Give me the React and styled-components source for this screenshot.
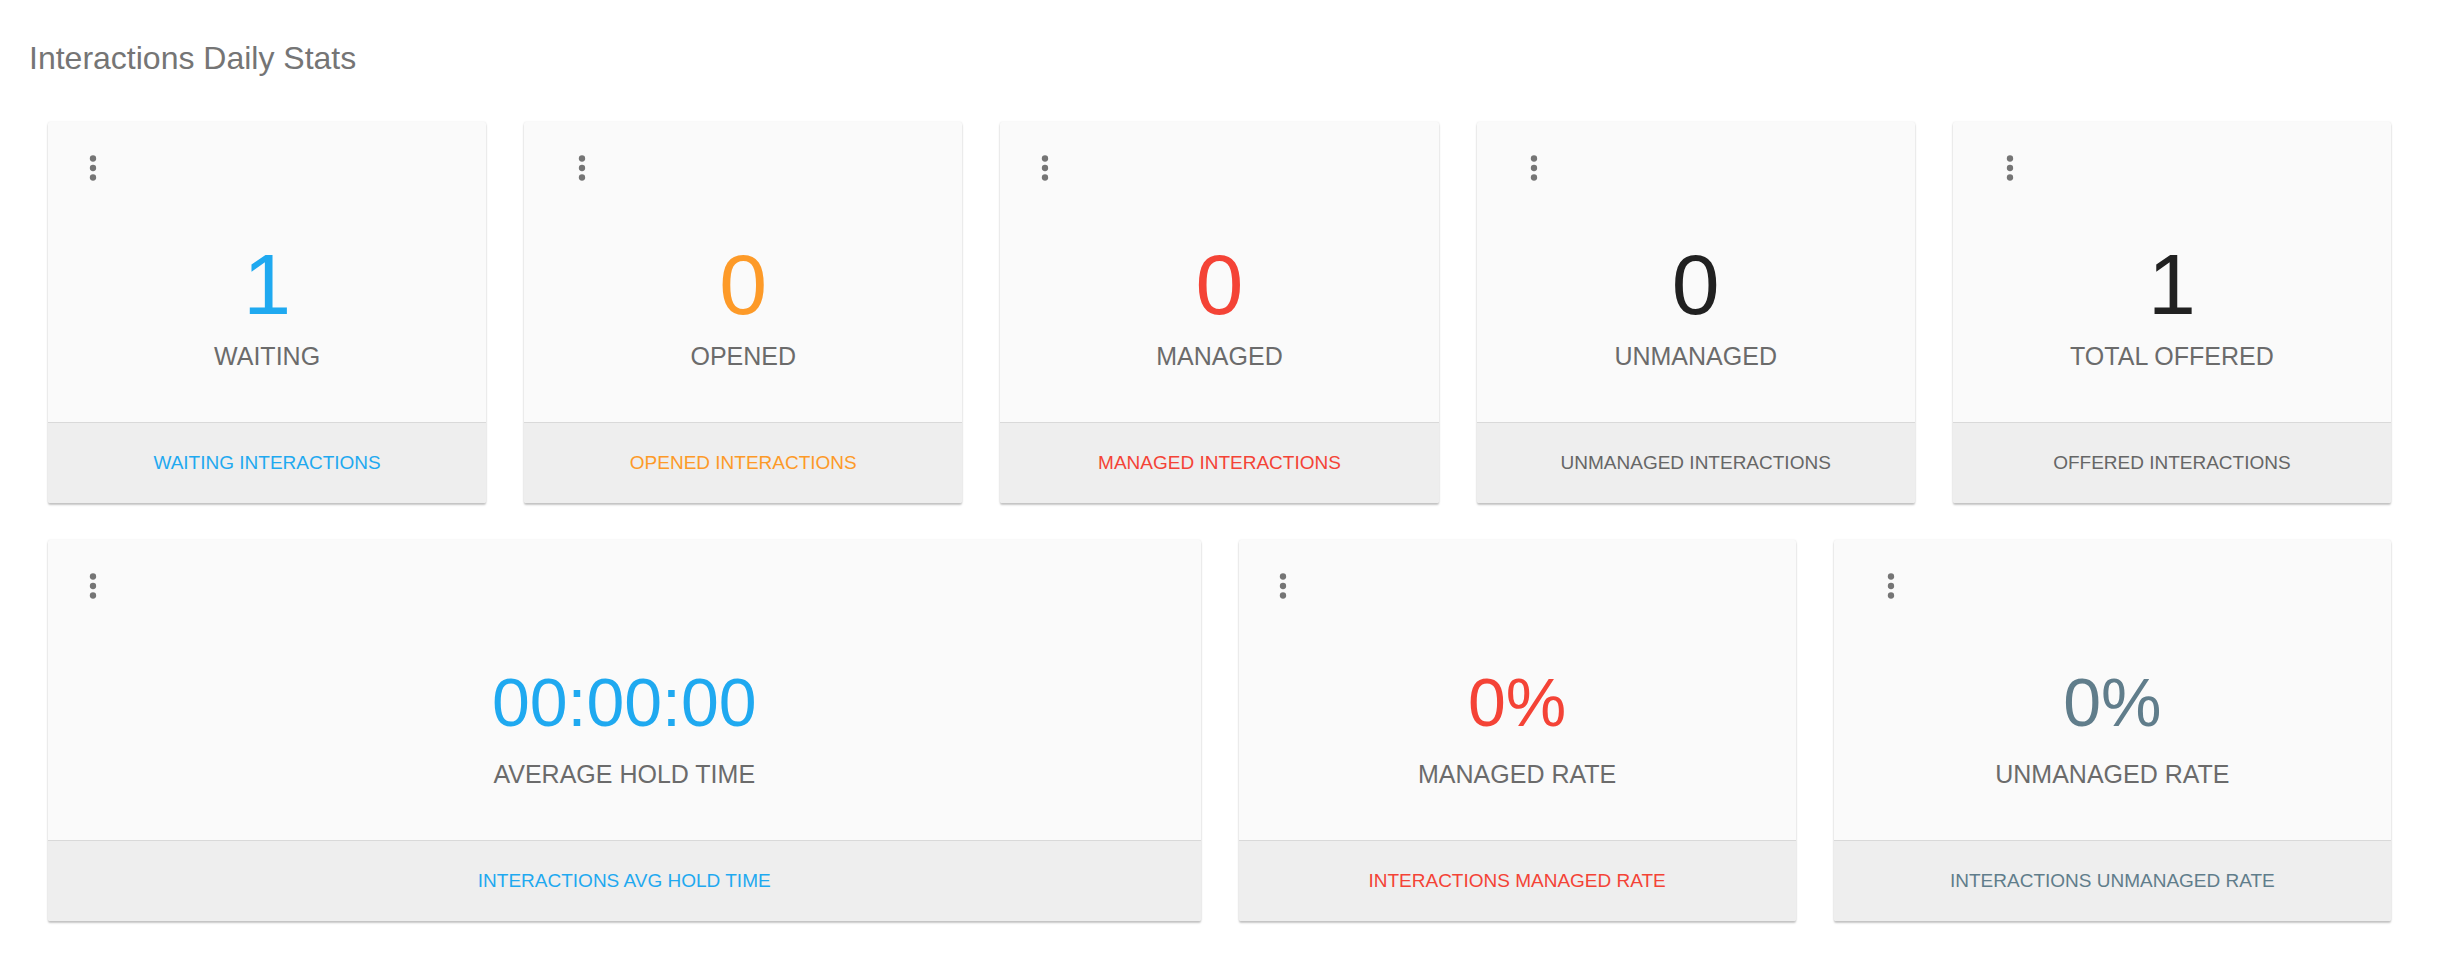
import React from 'react';
import styled, { createGlobalStyle } from 'styled-components';

const GlobalStyle = createGlobalStyle`
  html, body {
    margin: 0;
    padding: 0;
    background: #ffffff;
    font-family: "Liberation Sans", Arial, sans-serif;
  }
`;

const Page = styled.div`
  padding: 42px 30px 40px 29px;
`;

const Title = styled.h1`
  margin: 0;
  font-size: 32px;
  line-height: 32px;
  font-weight: 400;
  color: #757575;
`;

const Grid = styled.div`
  display: grid;
  grid-template-columns: repeat(${props => props.cols}, 1fr);
  column-gap: 38px;
  padding: 0 19px;
  margin-top: ${props => props.top}px;
`;

const Card = styled.div`
  grid-column: span ${props => props.span || 1};
  display: flex;
  flex-direction: column;
  border-radius: 2px;
  overflow: hidden;
  background: #fafafa;
  box-shadow: 0 2px 2px rgba(0, 0, 0, 0.22), 0 0 2px rgba(0, 0, 0, 0.1);
`;

const Body = styled.div`
  height: 300px;
  box-sizing: border-box;
  padding-top: 27px;
  display: flex;
  flex-direction: column;
  align-items: center;
`;

const MenuButton = styled.button`
  align-self: flex-start;
  margin-left: ${props => props.offset - 19}px;
  width: 38px;
  height: 38px;
  padding: 0;
  border: none;
  background: transparent;
  display: flex;
  cursor: pointer;
`;

const Value = styled.div`
  margin-top: 47px;
  height: 100px;
  line-height: 100px;
  font-size: ${props => props.size}px;
  color: ${props => props.color};
`;

const Label = styled.div`
  margin-top: 10px;
  font-size: 25px;
  line-height: 25px;
  color: #6b6b6b;
`;

const Footer = styled.div`
  height: 80px;
  border-top: 1px solid #d9d9d9;
  background: #eeeeee;
  display: flex;
  align-items: center;
  justify-content: center;
  font-size: 19px;
  color: ${props => props.color};
`;

const MoreIcon = () => (
  <svg width="38" height="38" viewBox="0 0 24 24" fill="#757575">
    <circle cx="12" cy="6" r="2" />
    <circle cx="12" cy="12" r="2" />
    <circle cx="12" cy="18" r="2" />
  </svg>
);

const BLUE = '#1fa9f0';
const ORANGE = '#fd9a28';
const RED = '#f44336';
const DARK = '#212121';
const GREY = '#666666';
const SLATE = '#607d8b';

const topStats = [
  { value: '1', label: 'WAITING', footer: 'WAITING INTERACTIONS', color: BLUE, footerColor: BLUE, menu: 45 },
  { value: '0', label: 'OPENED', footer: 'OPENED INTERACTIONS', color: ORANGE, footerColor: ORANGE, menu: 58 },
  { value: '0', label: 'MANAGED', footer: 'MANAGED INTERACTIONS', color: RED, footerColor: RED, menu: 45 },
  { value: '0', label: 'UNMANAGED', footer: 'UNMANAGED INTERACTIONS', color: DARK, footerColor: GREY, menu: 57 },
  { value: '1', label: 'TOTAL OFFERED', footer: 'OFFERED INTERACTIONS', color: DARK, footerColor: GREY, menu: 57 },
];

const bottomStats = [
  { value: '00:00:00', label: 'AVERAGE HOLD TIME', footer: 'INTERACTIONS AVG HOLD TIME', color: BLUE, footerColor: BLUE, span: 6, menu: 45 },
  { value: '0%', label: 'MANAGED RATE', footer: 'INTERACTIONS MANAGED RATE', color: RED, footerColor: RED, span: 3, menu: 44 },
  { value: '0%', label: 'UNMANAGED RATE', footer: 'INTERACTIONS UNMANAGED RATE', color: SLATE, footerColor: SLATE, span: 3, menu: 57 },
];

const StatCard = ({ stat, size }) => (
  <Card span={stat.span}>
    <Body>
      <MenuButton aria-label="more" offset={stat.menu}>
        <MoreIcon />
      </MenuButton>
      <Value size={size} color={stat.color}>{stat.value}</Value>
      <Label>{stat.label}</Label>
    </Body>
    <Footer color={stat.footerColor}>{stat.footer}</Footer>
  </Card>
);

export default function App() {
  return (
    <>
      <GlobalStyle />
      <Page>
        <Title>Interactions Daily Stats</Title>
        <Grid cols={5} top={48}>
          {topStats.map((s, i) => (
            <StatCard key={i} stat={s} size={86} />
          ))}
        </Grid>
        <Grid cols={12} top={37}>
          {bottomStats.map((s, i) => (
            <StatCard key={i} stat={s} size={68} />
          ))}
        </Grid>
      </Page>
    </>
  );
}
